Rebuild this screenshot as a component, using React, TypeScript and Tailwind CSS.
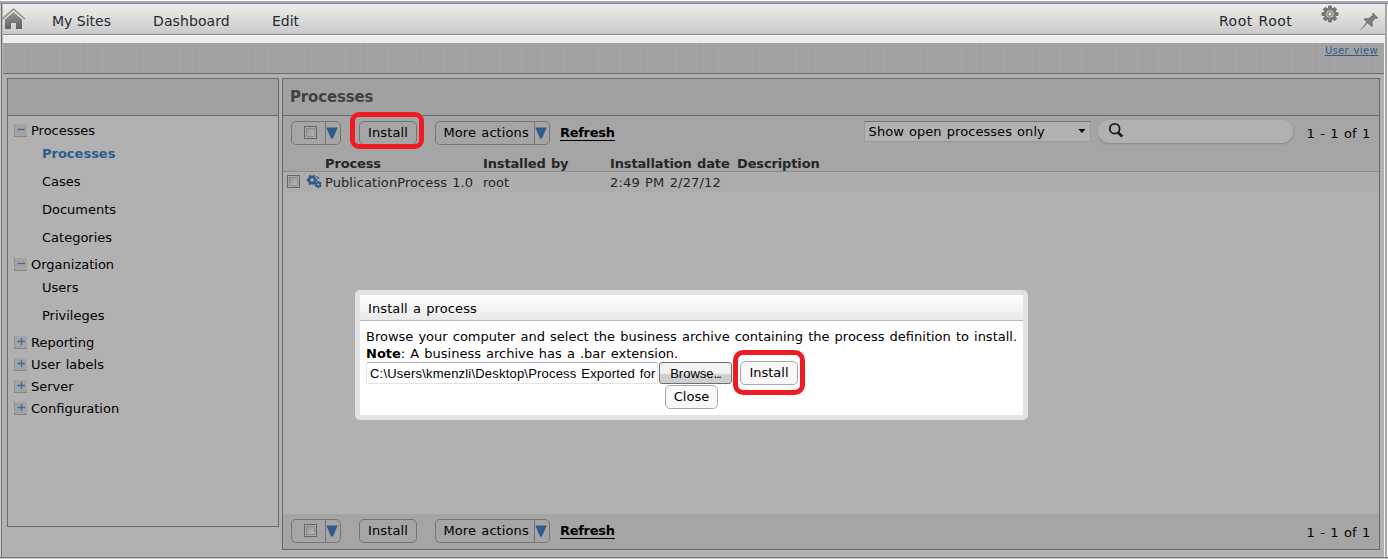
import React from "react";

const COLUMN_TITLE = "font-bold tracking-[-0.14px] text-[#262626] whitespace-nowrap";

function Check() {
  return (
    <span className="-mt-px flex h-[13px] w-[13px] shrink-0 border border-[#656565] bg-[#a9a9a9] p-px">
      <span className="h-full w-full border border-[#8b8b8b] bg-gradient-to-br from-[#95979a] to-[#b8b8b8]" />
    </span>
  );
}

function Triangle() {
  return (
    <svg width="12" height="12" viewBox="0 0 12 12" className="-ml-[3px] block shrink-0">
      <path d="M0.3 0.5H11.7L7 11.5H5Z" fill="#2d5c8c" />
    </svg>
  );
}

function Toolbar({ children }: { children?: React.ReactNode }) {
  return (
    <div className="flex h-6 items-center">
      <div className="flex h-6 w-[50px] rounded-[5px] border border-[#757575]">
        <div className="flex w-[34px] items-center justify-center border-r border-[#757575] pl-1">
          <Check />
        </div>
        <div className="flex flex-1 items-center justify-center">
          <Triangle />
        </div>
      </div>
      <div className="ml-[18px] flex h-6 w-[58px] items-center justify-center rounded-[5px] border border-[#757575] leading-[16px] tracking-[0.1px]">
        Install
      </div>
      <div className="ml-[18px] flex h-6 w-[115px] rounded-[5px] border border-[#757575]">
        <div className="flex w-[99px] items-center whitespace-nowrap border-r border-[#757575] pl-[7.5px] leading-[16px] tracking-[0.1px]">
          More actions
        </div>
        <div className="flex flex-1 items-center justify-center">
          <Triangle />
        </div>
      </div>
      <span className="ml-[10px] border-b border-black font-bold leading-[14px] tracking-[-0.3px]">
        Refresh
      </span>
      {children}
    </div>
  );
}

function Parent({ label, open }: { label: string; open?: boolean }) {
  return (
    <div className="flex h-[22px] items-center">
      <span className="mb-[2px] ml-[6px] flex h-[13px] w-[13px] items-center justify-center border-b border-l border-b-[#858585] border-l-[#939393] bg-[#a3a3a3]">
        <svg width="12" height="12" viewBox="0 0 12 12">
          <path d={open ? "M2.5 5.5H10" : "M2.5 5.5H10M6.5 2V9"} stroke="#3f6d98" strokeWidth="1.3" />
        </svg>
      </span>
      <span className="ml-1 whitespace-nowrap">{label}</span>
    </div>
  );
}

function Children({ labels, active }: { labels: string[]; active?: string }) {
  return (
    <div className="-mt-[2px] mb-[2px]">
      {labels.map((label) => (
        <div
          key={label}
          className={
            label === active
              ? "flex h-7 items-center pl-[34px] font-bold text-[#2d5c8c]"
              : "flex h-7 items-center pl-[34px]"
          }
        >
          {label}
        </div>
      ))}
    </div>
  );
}

function Home() {
  return (
    <svg width="24" height="23" viewBox="0 0 24 23">
      <defs>
        <linearGradient id="home" x1="0" y1="0" x2="0" y2="1">
          <stop offset="0" stopColor="#969696" />
          <stop offset="1" stopColor="#606060" />
        </linearGradient>
      </defs>
      <path d="M0.5 12L11.5 2L23 12" fill="none" stroke="#909090" strokeWidth="1.6" />
      <path d="M3 12.5L11.5 5L20 12.5V22H14V16H9V22H3Z" fill="url(#home)" />
    </svg>
  );
}

function Gear() {
  const teeth = [0, 45, 90, 135, 180, 225, 270, 315];
  return (
    <svg width="18" height="18" viewBox="0 0 18 18">
      <g fill="#747474">
        {teeth.map((a) => (
          <rect key={a} x="7" y="0.6" width="4" height="4" rx="0.8" transform={`rotate(${a} 9 9)`} />
        ))}
      </g>
      <circle cx="9" cy="9" r="5" fill="none" stroke="#7a7a7a" strokeWidth="2.8" />
      <circle cx="9" cy="9" r="2.2" fill="none" stroke="#808080" strokeWidth="1.3" />
    </svg>
  );
}

function Pin() {
  return (
    <svg width="19" height="19" viewBox="0 0 19 19">
      <path d="M13 0.5L18.5 6L16.5 7L15.5 6.5L12.5 10L13 13.5L11.5 15L7.5 11.3L0.5 18.7L0.3 18.3L6.3 10.2L3.5 7.2L5 6L8.5 6.3L12.5 3L12 2Z" fill="#7d7d7d" />
    </svg>
  );
}

function Cogs() {
  const teeth = [0, 60, 120, 180, 240, 300];
  return (
    <svg width="16" height="15" viewBox="0 0 16 15" fill="none" stroke="#2d5c8c">
      <circle cx="6" cy="6" r="3.1" strokeWidth="2.6" />
      {teeth.map((a) => (
        <path key={a} d="M6 0.7V2.7" strokeWidth="2.2" transform={`rotate(${a + 30} 6 6)`} />
      ))}
      <circle cx="12.3" cy="10.5" r="2" strokeWidth="1.8" />
      {teeth.map((a) => (
        <path key={a} d="M12.3 6.9V8.5" strokeWidth="1.5" transform={`rotate(${a} 12.3 10.5)`} />
      ))}
      <path d="M10.5 2.5L13 4.5" strokeWidth="1.5" />
    </svg>
  );
}

export default function App() {
  return (
    <div className="relative flex h-[559px] w-[1388px] flex-col overflow-hidden bg-[#b1b1b1] font-['DejaVu_Sans',sans-serif] text-[13px] leading-[16px] text-black [word-spacing:0.95px]">
      <div className="h-px bg-white" />
      <div className="h-[3px] border-b border-[#808791] bg-[#a5abb3]" />
      <div className="flex min-h-0 flex-1">
        <div className="w-px bg-[#d0d0d0]" />
        <div className="w-px bg-[#6f6f6f]" />
        <div className="w-px bg-[#b4b4b4]" />
        <div className="flex min-w-0 flex-1 flex-col">
          <header className="flex h-[31px] shrink-0 items-center border-b border-[#858585] bg-gradient-to-b from-[#eeeeec] to-[#cacaca] text-[14px] text-[#222b33]">
            <div className="-ml-[1px] -mt-px w-[50px]">
              <Home />
            </div>
            <span className="mt-[3px] w-[101px] [word-spacing:0px]">My Sites</span>
            <span className="mt-[3px] w-[119px] tracking-[0.1px]">Dashboard</span>
            <span className="mt-[3px] flex-1">Edit</span>
            <span className="mt-[3px] w-[102px] tracking-[0.5px]">Root Root</span>
            <div className="-mt-[11px] w-[39px]">
              <Gear />
            </div>
            <div className="mt-[5px] w-[25px]">
              <Pin />
            </div>
          </header>
          <div className="h-[8px] shrink-0 border-t border-white bg-[#ededed]" />
          <div className="flex min-h-0 flex-1">
            <div className="flex min-w-0 flex-1 flex-col">
              <div className="flex h-[31px] shrink-0 justify-end border-b border-[#686868] bg-[#a1a1a1] bg-[repeating-linear-gradient(90deg,#ffffff06_0px,#ffffff06_1px,transparent_1px,transparent_7px),repeating-linear-gradient(90deg,#ffffff05_0px,#ffffff05_2px,transparent_2px,transparent_11px),repeating-linear-gradient(0deg,#ffffff07_0px,#ffffff07_1px,transparent_1px,transparent_5px)] pr-[6px] pt-[1px] text-[10px] leading-[13px] tracking-[0.35px] text-[#2f5c8b]">
                <span className="underline">User view</span>
              </div>
              <main className="flex items-start pl-[4px] pt-[4px]">
                <aside className="h-[449px] w-[272px] border border-[#696969]">
                  <div className="mb-[4px] h-[37px] border-b border-[#696969] bg-[#a1a1a1]" />
                  <Parent label="Processes" open />
                  <Children labels={["Processes", "Cases", "Documents", "Categories"]} active="Processes" />
                  <Parent label="Organization" open />
                  <Children labels={["Users", "Privileges"]} />
                  <Parent label="Reporting" />
                  <Parent label="User labels" />
                  <Parent label="Server" />
                  <Parent label="Configuration" />
                </aside>
                <section className="ml-[3px] flex h-[472px] w-[1098px] flex-col border border-[#696969]">
                  <h1 className="flex h-[37px] shrink-0 items-center border-b border-[#696969] bg-[#a1a1a1] pl-[7px] text-[15px] font-bold tracking-[-0.15px] text-[#414141]">
                    Processes
                  </h1>
                  <div className="flex h-[56px] shrink-0 flex-col border-b border-[#8c8c8c] bg-[#a5a5a5] pl-2 pt-[5px]">
                    <Toolbar>
                      <div className="-mt-[3px] ml-[249px] flex h-[21px] w-[227px] shrink-0 items-center justify-between whitespace-nowrap border border-[#999] border-t-[#747474] bg-[#b1b1b1] pl-1 pr-[4px]">
                        <span className="tracking-[0.05px]">Show open processes only</span>
                        <svg width="8" height="5" viewBox="0 0 8 5">
                          <path d="M0.5 0H7.5L4 4Z" />
                        </svg>
                      </div>
                      <div className="-mt-[4px] ml-[7px] flex h-[23px] w-[195px] shrink-0 items-center rounded-[11px] bg-[#b1b1b1] pl-[10px] shadow-[0_1px_2px_#858585]">
                        <svg width="16" height="16" viewBox="0 0 16 16" fill="none" stroke="#1c1c1c" className="-mt-[2px]">
                          <circle cx="6.7" cy="6.7" r="4.9" strokeWidth="1.8" />
                          <path d="M10 10.5L14.3 14.5" strokeWidth="2.7" />
                        </svg>
                      </div>
                      <span className="ml-[14px] mt-[2px] whitespace-nowrap tracking-[0.15px]">1 - 1 of 1</span>
                    </Toolbar>
                    <div className="flex pl-[34px] pt-[11px]">
                      <span className={`${COLUMN_TITLE} w-[158px]`}>Process</span>
                      <span className={`${COLUMN_TITLE} w-[127px]`}>Installed by</span>
                      <span className={`${COLUMN_TITLE} w-[127px]`}>Installation date</span>
                      <span className={COLUMN_TITLE}>Description</span>
                    </div>
                  </div>
                  <div className="flex h-[20px] shrink-0 items-center whitespace-nowrap bg-[#adadad] pl-[4px] text-[#262626]">
                    <Check />
                    <span className="-mt-[2px] ml-[6px] w-[19px]">
                      <Cogs />
                    </span>
                    <span className="mt-px w-[158px] tracking-[0.08px]">PublicationProcess 1.0</span>
                    <span className="mt-px w-[127px]">root</span>
                    <span className="mt-px tracking-[0.16px]">2:49 PM 2/27/12</span>
                  </div>
                  <div className="flex-1" />
                  <div className="h-[35px] bg-[#a5a5a5] pl-2 pt-[5px]">
                    <Toolbar>
                      <span className="ml-[692px] mt-[3px] whitespace-nowrap tracking-[0.15px]">1 - 1 of 1</span>
                    </Toolbar>
                  </div>
                </section>
              </main>
            </div>
            <div className="w-px bg-[#efefef]" />
          </div>
        </div>
        <div className="w-[2px] bg-[#a7a7a7]" />
        <div className="w-px bg-white" />
      </div>
      <div className="h-px shrink-0 bg-[#777]" />
      <div className="h-px shrink-0 bg-[#c2c2c2]" />
      <div className="absolute left-[350px] top-[112px] h-[37px] w-[74px] rounded-[9px] border-[5px] border-[#ed1c24]" />

      <div className="absolute left-[355px] top-[290px] flex h-[130px] w-[673px] flex-col rounded-[5px] border-[5px] border-[#e2e2e2] bg-white">
        <div className="flex h-[26px] shrink-0 items-center border-b border-[#b9b9b9] bg-gradient-to-b from-white to-[#e9e9e9] pl-2">
          <span className="mt-[2px] tracking-[0.1px]">Install a process</span>
        </div>
        <div className="whitespace-nowrap pl-[6px] pt-[7px] leading-[17px]">
          <p>Browse your computer and select the business archive containing the process definition to install.</p>
          <p>
            <b>Note</b>: A business archive has a .bar extension.
          </p>
        </div>
        <div className="-mt-px flex items-start pl-[6px]">
          <div className="mt-px flex h-[22px] w-[292px] items-center overflow-hidden whitespace-nowrap rounded-[2px] border border-[#e0e4eb] border-t-[#a8abb3] pl-[3px] pt-[2px] font-['Liberation_Sans',sans-serif] tracking-[0.2px]">
            C:\Users\kmenzli\Desktop\Process Exported for
          </div>
          <div className="ml-px mt-px flex h-[22px] w-[73px] items-center justify-center rounded-[3px] border border-[#707070] bg-gradient-to-b from-[#f2f2f2] from-50% to-[#cfcfcf] to-60% pt-[2px] font-['Liberation_Sans',sans-serif]">
            <span>
              Browse<span className="tracking-[-1.2px]">...</span>
            </span>
          </div>
          <div className="ml-2 flex h-6 w-[58px] items-center justify-center rounded-[5px] border border-[#a9a9a9] bg-[#f8f8f8] leading-[16px]">
            Install
          </div>
        </div>
        <div className="ml-[305px] flex h-6 w-[53px] shrink-0 items-center justify-center rounded-[5px] border border-[#a9a9a9] bg-[#f8f8f8]">
          Close
        </div>
      </div>
      <div className="absolute left-[733px] top-[350px] h-[45px] w-[72px] rounded-[10px] border-[5px] border-[#ed1c24]" />
    </div>
  );
}
